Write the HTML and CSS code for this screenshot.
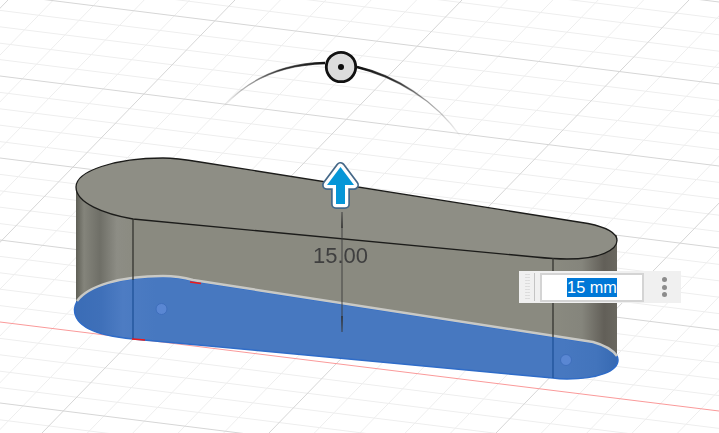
FILE: index.html
```html
<!DOCTYPE html>
<html lang="en">
<head>
<meta charset="utf-8">
<title>Extrude</title>
<link rel="stylesheet" href="styles.css">
</head>
<body>
<main class="viewport">
<svg class="scene" width="719" height="433" viewBox="0 0 719 433" xmlns="http://www.w3.org/2000/svg">
  <defs>
    <linearGradient id="wallLeft" gradientUnits="userSpaceOnUse" x1="76" y1="0" x2="133" y2="0">
      <stop offset="0" stop-color="#5f5f56"/>
      <stop offset="0.14" stop-color="#84847b"/>
      <stop offset="0.42" stop-color="#6f6f67"/>
      <stop offset="0.72" stop-color="#8d8d85"/>
      <stop offset="1" stop-color="#8b8b81"/>
    </linearGradient>
    <linearGradient id="wallRight" gradientUnits="userSpaceOnUse" x1="553" y1="0" x2="617" y2="0">
      <stop offset="0" stop-color="#8a8a80"/>
      <stop offset="0.45" stop-color="#85857c"/>
      <stop offset="0.8" stop-color="#625f58"/>
      <stop offset="1" stop-color="#6a6860"/>
    </linearGradient>
    <linearGradient id="blueFace" gradientUnits="userSpaceOnUse" x1="74" y1="0" x2="618" y2="0">
      <stop offset="0" stop-color="#3a6cb6"/>
      <stop offset="0.05" stop-color="#3f70b9"/>
      <stop offset="0.09" stop-color="#4d7cc3"/>
      <stop offset="0.15" stop-color="#4778c0"/>
      <stop offset="0.9" stop-color="#4778c0"/>
      <stop offset="0.96" stop-color="#4274bc"/>
      <stop offset="1" stop-color="#3669b2"/>
    </linearGradient>
    <linearGradient id="arcFade" gradientUnits="userSpaceOnUse" x1="222" y1="0" x2="462" y2="0">
      <stop offset="0" stop-color="#000" stop-opacity="0"/>
      <stop offset="0.25" stop-color="#222" stop-opacity="0.85"/>
      <stop offset="0.7" stop-color="#222" stop-opacity="0.85"/>
      <stop offset="1" stop-color="#000" stop-opacity="0"/>
    </linearGradient>
    <linearGradient id="arcCore" gradientUnits="userSpaceOnUse" x1="260" y1="0" x2="425" y2="0">
      <stop offset="0" stop-color="#111" stop-opacity="0"/>
      <stop offset="0.4" stop-color="#111"/>
      <stop offset="0.6" stop-color="#111"/>
      <stop offset="1" stop-color="#111" stop-opacity="0"/>
    </linearGradient>
  </defs>

  <g class="grid-minor">
    <line x1="0" y1="-71.6" x2="719" y2="18.4"/><line x1="0" y1="-55.2" x2="719" y2="34.8"/>
    <line x1="0" y1="-38.8" x2="719" y2="51.2"/><line x1="0" y1="-22.4" x2="719" y2="67.6"/>
    <line x1="0" y1="10.4" x2="719" y2="100.4"/><line x1="0" y1="26.8" x2="719" y2="116.8"/>
    <line x1="0" y1="43.2" x2="719" y2="133.2"/><line x1="0" y1="59.6" x2="719" y2="149.6"/>
    <line x1="0" y1="92.4" x2="719" y2="182.4"/><line x1="0" y1="108.8" x2="719" y2="198.8"/>
    <line x1="0" y1="125.2" x2="719" y2="215.2"/><line x1="0" y1="141.6" x2="719" y2="231.6"/>
    <line x1="0" y1="174.4" x2="719" y2="264.4"/><line x1="0" y1="190.8" x2="719" y2="280.8"/>
    <line x1="0" y1="207.2" x2="719" y2="297.2"/><line x1="0" y1="223.6" x2="719" y2="313.6"/>
    <line x1="0" y1="256.4" x2="719" y2="346.4"/><line x1="0" y1="272.8" x2="719" y2="362.8"/>
    <line x1="0" y1="289.2" x2="719" y2="379.2"/><line x1="0" y1="305.6" x2="719" y2="395.6"/>
    <line x1="0" y1="338.4" x2="719" y2="428.4"/><line x1="0" y1="354.8" x2="719" y2="444.8"/>
    <line x1="0" y1="371.2" x2="719" y2="461.2"/><line x1="0" y1="387.6" x2="719" y2="477.6"/>
    <line x1="0" y1="419.8" x2="719" y2="509.8"/>

    <line x1="53.4" y1="0" x2="-366.6" y2="433"/><line x1="98.8" y1="0" x2="-321.2" y2="433"/>
    <line x1="144.2" y1="0" x2="-275.8" y2="433"/><line x1="189.6" y1="0" x2="-230.4" y2="433"/>
    <line x1="280.4" y1="0" x2="-139.6" y2="433"/><line x1="325.8" y1="0" x2="-94.2" y2="433"/>
    <line x1="371.2" y1="0" x2="-48.8" y2="433"/><line x1="416.6" y1="0" x2="-3.4" y2="433"/>
    <line x1="507.4" y1="0" x2="87.4" y2="433"/><line x1="552.8" y1="0" x2="132.8" y2="433"/>
    <line x1="598.2" y1="0" x2="178.2" y2="433"/><line x1="643.6" y1="0" x2="223.6" y2="433"/>
    <line x1="734.4" y1="0" x2="314.4" y2="433"/><line x1="779.8" y1="0" x2="359.8" y2="433"/>
    <line x1="825.2" y1="0" x2="405.2" y2="433"/><line x1="870.6" y1="0" x2="450.6" y2="433"/>
    <line x1="961.4" y1="0" x2="541.4" y2="433"/><line x1="1006.8" y1="0" x2="586.8" y2="433"/>
    <line x1="1052.2" y1="0" x2="632.2" y2="433"/><line x1="1097.6" y1="0" x2="677.6" y2="433"/>
  </g>
  <g class="grid-major">
    <line x1="0" y1="-88" x2="719" y2="2"/><line x1="0" y1="-6" x2="719" y2="84"/>
    <line x1="0" y1="76" x2="719" y2="166"/><line x1="0" y1="158" x2="719" y2="248"/>
    <line x1="0" y1="240" x2="719" y2="330"/><line x1="0" y1="403" x2="719" y2="493"/>
    <line x1="8" y1="0" x2="-412" y2="433"/><line x1="235" y1="0" x2="-185" y2="433"/>
    <line x1="462" y1="0" x2="42" y2="433"/><line x1="689" y1="0" x2="269" y2="433"/>
    <line x1="916" y1="0" x2="496" y2="433"/><line x1="1143" y1="0" x2="723" y2="433"/>
  </g>
  <line class="axis-x" x1="0" y1="322" x2="719" y2="411"/>

  <path class="arc-thin" d="M223,107 C250,77 285,64 325,63 M357,67 C395,76 435,100 461,137"/>
  <path class="arc-thick" d="M223,107 C250,77 285,64 325,63 M357,67 C395,76 435,100 461,137"/>
  <circle class="handle-ring" cx="341" cy="67" r="14.7"/>
  <circle class="handle-dot" cx="341" cy="67" r="3"/>

  <!-- walls -->
  <path class="wall-mid" d="M133,210 L553,250 L553,360 L133,320 Z"/>
  <path class="wall-left" d="M76,188 L76,312 L133,320 L133,210 Z"/>
  <path class="wall-right" d="M553,250 L617,235 L617,362 L553,360 Z"/>

  <!-- top face -->
  <path class="face-top" d="M76,187 C76,171 115,158 163,158 C176,158 188,160 200,162 L588,223.500 C605,227 617,232 617,240.500 C617,250 600,259 567,259 C555,259 545,258 535,257 L133,219 C104,214 76,203 76,187 Z"/>

  <!-- bottom profile -->
  <path class="face-blue" d="M74.500,309 C76,290 115,277 163,277 C176,277 186,279 193,281 L593,343 C607,346 618,352 618,360 C618,371 598,379 567,379 C560,379 556,378.500 553,378 L133,339 C100,336 74,328 74.500,309 Z"/>
  <path class="profile-edge" d="M77,301 C88,286 120,276 163,276 C176,276 186,278 193,280 L593,342 C604,345 612,349 617,356"/>

  <line class="edge-blue" x1="133" y1="280" x2="133" y2="339"/>
  <line class="edge-blue" x1="553" y1="337" x2="553" y2="378"/>
  <line class="edge-wall" x1="133" y1="219" x2="133" y2="280"/>
  <line class="edge-wall" x1="553" y1="258" x2="553" y2="337"/>

  <circle class="sketch-point" cx="161.500" cy="309" r="5.500"/>
  <circle class="sketch-point" cx="566" cy="360" r="5.500"/>

  <line class="red-mark" x1="190" y1="282" x2="201" y2="283.500"/>
  <line class="red-mark" x1="132" y1="339" x2="145" y2="340"/>

  <!-- dimension -->
  <line class="dim-line" x1="342" y1="212" x2="342" y2="332"/>
  <path class="dim-head" d="M342,212 L342.700,228 L341.300,228 Z M342,332 L342.700,316 L341.300,316 Z"/>
  <text class="dim-label" x="313" y="263">15.00</text>

  <!-- arrow -->
  <path class="arrow-rim" d="M340.500,167 L354,185 L345,185 L345,204 L336,204 L336,185 L327,185 Z"/>
  <path class="arrow-halo" d="M340.500,167 L354,185 L345,185 L345,204 L336,204 L336,185 L327,185 Z"/>
  <path class="arrow-fill" d="M340.500,167 L354,185 L345,185 L345,204 L336,204 L336,185 L327,185 Z"/>
</svg>

<div class="dim-input">
  <div class="grip"></div>
  <div class="value-box"><span class="value">15 mm</span></div>
  <div class="kebab"><i></i><i></i><i></i></div>
</div>
</main>
</body>
</html>
```

FILE: styles.css
```css
html, body {
  margin: 0;
  padding: 0;
  background: #fff;
}

.viewport {
  position: relative;
  width: 719px;
  height: 433px;
  overflow: hidden;
  background: #fff;
}

.scene {
  display: block;
  filter: blur(0.4px);
}

.grid-minor line {
  stroke: #eeeeee;
  stroke-width: 1;
}

.grid-major line {
  stroke: #d6d6d6;
  stroke-width: 1;
}

.axis-x {
  stroke: #fa9a9a;
  stroke-width: 1;
}

.arc-thin {
  fill: none;
  stroke: url(#arcFade);
  stroke-width: 1.300;
}

.arc-thick {
  fill: none;
  stroke: url(#arcCore);
  stroke-width: 2.400;
}

.handle-ring {
  fill: #dcdcdc;
  stroke: #111;
  stroke-width: 2.800;
}

.handle-dot {
  fill: #0c0c0c;
}

.wall-mid {
  fill: #8a8a80;
}

.wall-left {
  fill: url(#wallLeft);
}

.wall-right {
  fill: url(#wallRight);
}

.face-top {
  fill: #8e8e85;
  stroke: #1c1c1a;
  stroke-width: 1.300;
}

.face-blue {
  fill: url(#blueFace);
  stroke: #2f6cc8;
  stroke-width: 1.500;
}

.profile-edge {
  fill: none;
  stroke: #c9c9c5;
  stroke-width: 2.500;
}

.edge-blue {
  stroke: #1f5299;
  stroke-width: 1.300;
}

.edge-wall {
  stroke: #33332f;
  stroke-width: 1.300;
}

.sketch-point {
  fill: #5a87d3;
  stroke: #3f6fbc;
  stroke-width: 1;
}

.red-mark {
  stroke: #f01818;
  stroke-width: 1.500;
}

.dim-line {
  stroke: #3a3a3a;
  stroke-width: 0.900;
}

.dim-head {
  fill: #2f2f2f;
}

.dim-label {
  font-family: "Liberation Sans", Arial, sans-serif;
  font-size: 22px;
  fill: #3f3f3f;
}

.arrow-rim {
  fill: #456888;
  stroke: #456888;
  stroke-width: 10;
  stroke-linejoin: round;
}

.arrow-halo {
  fill: #fff;
  stroke: #fff;
  stroke-width: 6.500;
  stroke-linejoin: round;
}

.arrow-fill {
  fill: #0696d7;
}

.dim-input {
  position: absolute;
  left: 519px;
  top: 271px;
  width: 162px;
  height: 32px;
  display: flex;
  align-items: center;
  background: #f0f0f0;
  box-sizing: border-box;
}

.grip {
  position: relative;
  width: 5px;
  height: 28px;
  margin-left: 6px;
  margin-right: 6px;
  background-image: radial-gradient(circle, #dadada 0.8px, transparent 1px);
  background-size: 2.500px 3px;
}

.grip::after {
  content: "";
  position: absolute;
  top: 0;
  bottom: 0;
  right: -5px;
  width: 1px;
  background: #c4c4c4;
}

.value-box {
  width: 104px;
  height: 29px;
  margin-left: 4px;
  box-sizing: border-box;
  border: 2px solid #d4d4d4;
  background: #fff;
  display: flex;
  align-items: center;
  justify-content: center;
}

.value {
  font-family: "Liberation Sans", Arial, sans-serif;
  font-size: 16.300px;
  line-height: 19px;
  color: #fff;
  background: #0078d7;
  white-space: nowrap;
}

.kebab {
  flex: 1;
  display: flex;
  flex-direction: column;
  align-items: center;
  gap: 2.500px;
  padding-left: 3px;
}

.kebab i {
  display: block;
  width: 5px;
  height: 5px;
  border-radius: 50%;
  background: #8c8c8c;
}
```
